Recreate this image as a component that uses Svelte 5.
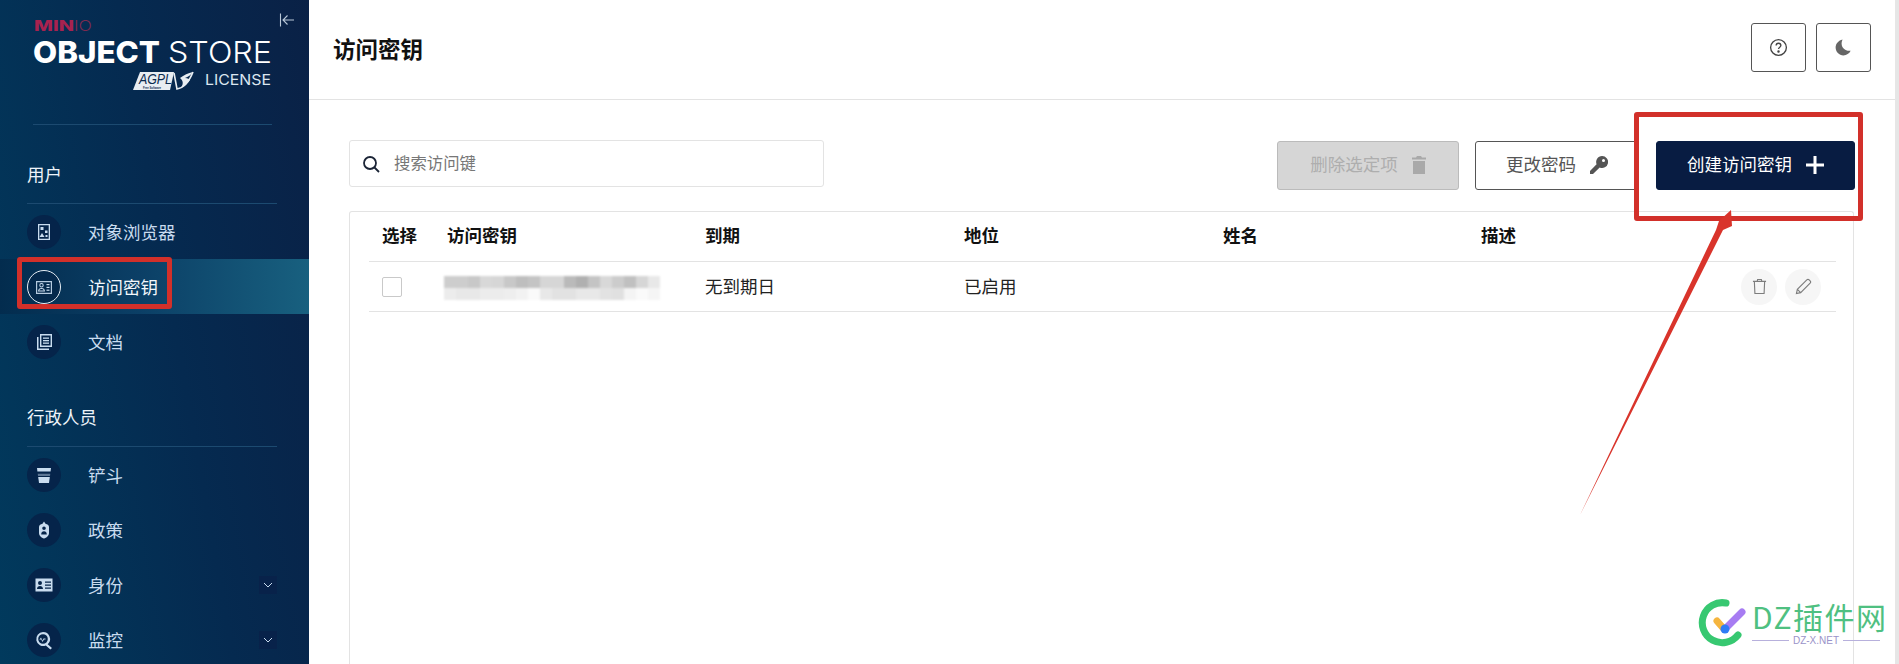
<script>
	const topNav = [
		{ label: '对象浏览器', icon: 'browser' },
		{ label: '访问密钥', icon: 'keys', active: true },
		{ label: '文档', icon: 'docs' }
	];
	const adminNav = [
		{ label: '铲斗', icon: 'bucket' },
		{ label: '政策', icon: 'policy' },
		{ label: '身份', icon: 'identity', more: true },
		{ label: '监控', icon: 'monitor', more: true }
	];
	const columns = ['选择', '访问密钥', '到期', '地位', '姓名', '描述'];
	// pixelated smear over the secret key: greys per 12px block
	const smearTop = [205, 205, 200, 216, 214, 200, 190, 196, 214, 214, 186, 176, 196, 216, 204, 192, 214, 232];
	const smearBottom = [236, 232, 232, 236, 236, 238, 242, 250, 232, 226, 226, 232, 232, 226, 224, 244, 250, 245];
</script>

{#snippet navIcon(name)}
	<svg viewBox="0 0 20 20" width="20" height="20" fill="#c9dcef">
		{#if name === 'browser'}
			<path fill-rule="evenodd" d="M4 2h12v16H4zM5.300 3.300v13.400h9.400V3.300z" />
			<rect x="6.500" y="5" width="3" height="3" />
			<rect x="11" y="8.500" width="2.500" height="2.500" />
			<path d="M8 11l2.500 4h-5z" />
			<rect x="11.500" y="13" width="2" height="2" />
		{:else if name === 'keys'}
			<path fill-rule="evenodd" d="M2 4h16v13H2zM3.200 5.200v10.600h13.600V5.200z" opacity="0.9" />
			<path fill-rule="evenodd" d="M7.500 6a2.200 2.200 0 110 4.400 2.200 2.200 0 010-4.400zM7.500 7a1.200 1.200 0 100 2.400A1.200 1.200 0 007.500 7z" />
			<path fill-rule="evenodd" d="M4 14.500c0-2.500 1.500-3.500 3.500-3.500s3.500 1 3.500 3.500zM5.200 13.500h4.600c-.2-1-1-1.500-2.300-1.500s-2.100.5-2.300 1.500z" />
			<rect x="12.500" y="7" width="3" height="1.200" />
			<rect x="12.500" y="9.800" width="3" height="1.200" />
			<rect x="12.500" y="12.600" width="3" height="1.200" />
		{:else if name === 'docs'}
			<path fill-rule="evenodd" d="M6 2h12v13H6zM7.400 3.400v10.200h9.200V3.400z" />
			<rect x="9" y="5.500" width="6" height="1.300" />
			<rect x="9" y="8" width="6" height="1.300" />
			<rect x="9" y="10.500" width="6" height="1.300" />
			<path d="M3 5h1.500v11.500H15V18H3z" />
		{:else if name === 'bucket'}
			<path d="M3 3h14l-.4 3.500H3.400z" />
			<path d="M3.700 8.800h12.600l-.3 2.200H4z" opacity="0.45" />
			<path d="M4.200 12h11.600L15 18H5z" />
		{:else if name === 'policy'}
			<path fill-rule="evenodd" d="M10 1.500l1.500 2.200c1.800.3 3.500 1.500 3.500 3.300v6c0 2.800-2.500 4.800-5 5.500-2.500-.7-5-2.700-5-5.500V7c0-1.800 1.700-3 3.500-3.300zM10 6.500a1.800 1.800 0 100 3.600 1.800 1.800 0 000-3.600zM7.200 14.500h5.600c0-2-1.200-3.200-2.800-3.200s-2.800 1.200-2.800 3.200z" />
		{:else if name === 'identity'}
			<path fill-rule="evenodd" d="M1.500 3.500h17v13h-17zM6 6a2 2 0 100 4 2 2 0 000-4zM3 14h6c0-2-1.300-3-3-3s-3 1-3 3zM11 6.500v1.300h6V6.500zM11 9.500v1.300h6V9.500zM11 12.500v1.300h6v-1.300z" />
		{:else}
			<path fill-rule="evenodd" d="M9 2a7 7 0 014.700 12.200l4.300 3.800-1.600 1.500-4.600-4A7 7 0 119 2zM9 4.200a4.800 4.800 0 100 9.600 4.800 4.800 0 000-9.600z" />
			<path d="M5.500 9.500l1.500-2 1.500 3 1-2h2v1H10l-1.500 2.500-1.500-3-.8 1z" />
		{/if}
	</svg>
{/snippet}

{#snippet navList(items)}
	{#each items as item}
		<div class="nav-item" class:active={item.active}>
			<span class="nav-icon">{@render navIcon(item.icon)}</span>
			<span class="nav-label">{item.label}</span>
			{#if item.more}
				<span class="nav-more">
					<svg viewBox="0 0 10 10" width="10" height="10" fill="none" stroke="#c9dcef" stroke-width="1">
						<path d="M1 3l4 4 4-4" />
					</svg>
				</span>
			{/if}
		</div>
	{/each}
{/snippet}

<div class="page">
	<aside class="sidebar">
		<div class="logo">
			<svg viewBox="0 0 239 72" width="239" height="72">
				<text x="1" y="13" class="minio" textLength="40" lengthAdjust="spacingAndGlyphs" fill="#a8224f">MIN</text>
				<text x="41" y="13" class="minio-thin" textLength="18" lengthAdjust="spacingAndGlyphs" fill="#7c2a50">IO</text>
				<text x="0" y="45" class="object" textLength="127" lengthAdjust="spacingAndGlyphs" fill="#fff">OBJECT</text>
				<text x="135" y="45" class="store" textLength="104" lengthAdjust="spacingAndGlyphs" fill="#fff">STORE</text>
				<polygon points="107,54 141,54 137,72 100,72" fill="#e8edf2" />
				<text x="106" y="66" class="agpl" textLength="33" lengthAdjust="spacingAndGlyphs" fill="#0a2a4e">AGPL</text>
				<text x="110" y="70.500" class="agpl-sub" textLength="18" lengthAdjust="spacingAndGlyphs" fill="#0a2a4e">Free Software</text>
				<!-- wing mark -->
				<path d="M141 55l3 16c6-1 12-7 16-17" fill="none" stroke="#e8edf2" stroke-width="1.600" />
				<path d="M147 60c4-3 8-5 13-6-2 3-5 5-8 6 3 0 4 1 5 2-2 3-5 6-9 8 2-3 3-7-1-10z" fill="#e8edf2" />
				<text x="172" y="67" class="license" textLength="66" lengthAdjust="spacingAndGlyphs" fill="#dbe6f0">LICENSE</text>
			</svg>
		</div>
		<button class="collapse" aria-label="collapse">
			<svg viewBox="0 0 16 16" width="16" height="16" fill="none" stroke="#b9c8d8" stroke-width="1.100">
				<path d="M1.500 1.500v13M15 8H4M8.500 3.500L4 8l4.500 4.500" />
			</svg>
		</button>

		<div class="section-title">用户</div>
		{@render navList(topNav)}
		<div class="section-title">行政人员</div>
		{@render navList(adminNav)}
	</aside>

	<main class="main">
		<header class="header">
			<h1>访问密钥</h1>
			<div class="header-actions">
				<button class="square" aria-label="help">
					<svg viewBox="0 0 20 20" width="19" height="19" fill="none" stroke="#444" stroke-width="1.400">
						<circle cx="10" cy="10" r="8.300" />
						<path d="M7.500 8a2.500 2.500 0 115 0c0 1.600-2.500 1.800-2.500 3.600" />
						<circle cx="10" cy="14.300" r="0.600" fill="#444" />
					</svg>
				</button>
				<button class="square" aria-label="theme">
					<svg viewBox="0 0 20 20" width="19" height="19" fill="#666">
						<path d="M9 1.500c-1.500 3-1.300 6.300.4 8.700 1.600 2.300 4.500 3.600 8.100 3.300-1.400 2.900-4.300 4.900-7.600 4.900C5.400 18.400 1.700 14.700 1.700 10.100 1.700 6 4.800 2.300 9 1.500z" />
					</svg>
				</button>
			</div>
		</header>

		<section class="content">
			<div class="toolbar">
				<div class="search">
					<svg viewBox="0 0 18 18" width="18" height="18" fill="none" stroke="#1b2436" stroke-width="1.800">
						<circle cx="8" cy="8" r="6" />
						<path d="M12.500 12.500L17 17" />
					</svg>
					<span class="lift">搜索访问键</span>
				</div>
				<div class="toolbar-buttons">
					<button class="btn btn-disabled">
						<span class="lift">删除选定项</span>
						<svg viewBox="0 0 14 18" width="14" height="18" fill="#a9a9a9">
							<path d="M5 0h4l1 1.500h4V3.500H0V1.500h4zM1 5h12v13H1z" />
						</svg>
					</button>
					<button class="btn btn-outline">
						<span class="lift">更改密码</span>
						<svg viewBox="0 0 18 18" width="18" height="18" fill="#555">
							<path fill-rule="evenodd" d="M12 0a6 6 0 11-2.300 11.500L3 18H0v-3l6.600-6.700A6 6 0 0112 0zm1.500 3a1.500 1.500 0 100 3 1.500 1.500 0 000-3z" />
						</svg>
					</button>
					<button class="btn btn-primary">
						<span class="lift">创建访问密钥</span>
						<svg viewBox="0 0 18 18" width="18" height="18" fill="#fff">
							<path d="M7.500 0h3v7.500H18v3h-7.500V18h-3v-7.500H0v-3h7.500z" />
						</svg>
					</button>
				</div>
			</div>

			<div class="table">
				<div class="row head">
					{#each columns as column}
						<span>{column}</span>
					{/each}
				</div>
				<div class="row">
					<span class="check"></span>
					<span class="smear">
						<span class="smear-row">
							{#each smearTop as g}
								<i style="background: rgb({g},{g},{g})"></i>
							{/each}
						</span>
						<span class="smear-row">
							{#each smearBottom as g}
								<i style="background: rgb({g},{g},{g})"></i>
							{/each}
						</span>
					</span>
					<span class="lift">无到期日</span>
					<span class="lift">已启用</span>
					<span></span>
					<span class="row-actions">
						<button class="round" aria-label="delete">
							<svg viewBox="0 0 16 18" width="15" height="17" fill="none" stroke="#7d7d7d" stroke-width="1.200">
								<path d="M1 3.500h14M5.500 3.500l.5-2h4l.5 2M2.500 3.500l.6 13h9.800l.6-13" />
							</svg>
						</button>
						<button class="round" aria-label="edit">
							<svg viewBox="0 0 18 18" width="17" height="17" fill="none" stroke="#7d7d7d" stroke-width="1.200">
								<path d="M1.500 16.500l1-4.500L12.500 2a1.800 1.800 0 012.500 0l1 1a1.800 1.800 0 010 2.500L6 15.500zM2.500 12L6 15.500" />
							</svg>
						</button>
					</span>
				</div>
			</div>
		</section>
	</main>

	<div class="scrollbar"></div>

	<!-- annotations drawn on top of the screenshot -->
	<div class="mark mark-nav"></div>
	<div class="mark mark-create"></div>
	<svg class="arrow" viewBox="0 0 160 315" width="160" height="315">
		<polygon points="0,310 136,25 139,16 151,5 152,21 143,25" fill="#d9342b" />
	</svg>

	<div class="watermark">
		<svg viewBox="0 0 50 52" width="50" height="52">
			<path d="M29 5A20 20 0 1 0 41 37" fill="none" stroke="#37c871" stroke-width="7" stroke-linecap="round" />
			<path d="M20 23l7 8" stroke="#f5b53f" stroke-width="7" stroke-linecap="round" />
			<path d="M28 31l17-17" stroke="#a77cf2" stroke-width="7" stroke-linecap="round" />
			<circle cx="28" cy="31" r="4.500" fill="#2f7cf6" />
		</svg>
		<div class="wm-text">
			<div class="wm-name">DZ插件网</div>
			<div class="wm-site"><span>DZ-X.NET</span></div>
		</div>
	</div>
</div>

<style>
	:global(body) {
		margin: 0;
		background: #fff;
		font-family: 'Noto Sans CJK SC', 'Liberation Sans', sans-serif;
	}

	.page {
		position: relative;
		display: flex;
		height: 664px;
		overflow: hidden;
		color: #222;
	}

	button {
		font: inherit;
		cursor: pointer;
	}

	.lift {
		margin-bottom: 3px;
	}

	.sidebar {
		position: relative;
		flex: none;
		width: 309px;
		height: 664px;
		background: linear-gradient(80deg, #013a5d 0%, #052a50 55%, #0a2146 100%);
		color: #fff;
	}

	.logo {
		height: 125px;
		margin: 0 37px 1px 33px;
		padding-top: 18px;
		box-sizing: border-box;
		border-bottom: 1px solid #1c4a70;
	}

	.logo svg {
		display: block;
	}

	.minio {
		font: 800 14px Inter, sans-serif;
	}

	.minio-thin {
		font: 300 14px Inter, sans-serif;
	}

	.object {
		font: 800 30px Inter, sans-serif;
	}

	.store {
		font: 300 30px Inter, sans-serif;
	}

	.agpl {
		font: italic 400 14px 'Liberation Sans', sans-serif;
	}

	.agpl-sub {
		font: 700 3.500px 'Liberation Sans', sans-serif;
	}

	.license {
		font: 400 15px Inter, sans-serif;
	}

	.collapse {
		position: absolute;
		top: 12px;
		left: 279px;
		padding: 0;
		border: 0;
		background: none;
		line-height: 0;
	}

	.section-title {
		display: flex;
		align-items: flex-end;
		height: 78px;
		box-sizing: border-box;
		margin: 0 32px 0 27px;
		padding-bottom: 17px;
		border-bottom: 1px solid #1c4a70;
		font-size: 17.500px;
		line-height: 24px;
		color: #eef4fa;
	}

	.nav-item {
		display: flex;
		align-items: center;
		height: 55px;
		padding: 0 32px 0 27px;
		color: #c9dcef;
		font-size: 17.500px;
	}

	.nav-item.active {
		background: linear-gradient(90deg, #032c4e 0%, #0b3f66 45%, #18607f 100%);
		color: #f2f7fb;
	}

	.nav-icon {
		flex: none;
		display: flex;
		align-items: center;
		justify-content: center;
		width: 34px;
		height: 34px;
		box-sizing: border-box;
		margin-right: 27px;
		border-radius: 50%;
		background: #05244a;
	}

	.active .nav-icon {
		border: 1px solid #e6eef5;
		background: #04294c;
	}

	.nav-label {
		flex: 1;
	}

	.nav-more {
		display: flex;
		align-items: center;
		justify-content: center;
		width: 18px;
		height: 18px;
		background: #08224a;
	}

	.main {
		flex: 1;
		min-width: 0;
		display: flex;
		flex-direction: column;
	}

	.header {
		flex: none;
		display: flex;
		align-items: center;
		justify-content: space-between;
		height: 100px;
		box-sizing: border-box;
		padding: 0 24px 4px 24px;
		border-bottom: 1px solid #e3e3e3;
	}

	h1 {
		margin: 0;
		font-size: 22.500px;
		font-weight: 700;
		color: #111;
	}

	.header-actions {
		display: flex;
		gap: 10px;
	}

	.square {
		display: flex;
		align-items: center;
		justify-content: center;
		width: 55px;
		height: 49px;
		padding: 0;
		background: #fff;
		border: 1px solid #555;
		border-radius: 3px;
	}

	.content {
		flex: 1;
		display: flex;
		flex-direction: column;
		padding: 40px 41px 0 40px;
	}

	.toolbar {
		display: flex;
		align-items: flex-start;
		justify-content: space-between;
		margin-right: -1px;
	}

	.search {
		display: flex;
		align-items: center;
		gap: 14px;
		width: 475px;
		height: 47px;
		box-sizing: border-box;
		padding-left: 12px;
		border: 1px solid #e3e3e3;
		border-radius: 3px;
		font-size: 16.400px;
		color: #777;
	}

	.toolbar-buttons {
		display: flex;
		margin-top: 1px;
	}

	.btn {
		display: flex;
		align-items: center;
		justify-content: center;
		gap: 14px;
		height: 49px;
		padding: 0 0 2px;
		border-radius: 3px;
		font-size: 17.500px;
	}

	.btn-disabled {
		width: 182px;
		margin-right: 16px;
		background: #d6d6d6;
		border: 1px solid #bbb;
		color: #aeaeae;
	}

	.btn-outline {
		width: 164px;
		margin-right: 17px;
		background: #fff;
		border: 1px solid #555;
		color: #555;
	}

	.btn-primary {
		width: 199px;
		background: #081c42;
		border: 1px solid #081c42;
		color: #fff;
	}

	.table {
		flex: 1;
		margin-top: 21px;
		padding: 0 17px 0 19px;
		border: 1px solid #e3e3e3;
		border-bottom: 0;
		border-radius: 3px 3px 0 0;
	}

	.row {
		display: grid;
		grid-template-columns: 65px 258px 259px 259px 258px 1fr;
		align-items: center;
		height: 50px;
		padding-left: 13px;
		box-sizing: border-box;
		border-bottom: 1px solid #e3e3e3;
		font-size: 17.500px;
		color: #222;
	}

	.row.head {
		padding-bottom: 5px;
		font-weight: 700;
		color: #111;
	}

	.check {
		width: 20px;
		height: 20px;
		box-sizing: border-box;
		border: 1px solid #c9c9c9;
		border-radius: 2px;
	}

	.smear {
		display: block;
		width: 216px;
		margin: 3px 0 0 -3px;
		filter: blur(1.200px);
	}

	.smear-row {
		display: flex;
		height: 12px;
	}

	.smear-row i {
		width: 12px;
	}

	.row-actions {
		grid-column: 6;
		grid-row: 1;
		display: flex;
		justify-content: flex-end;
		gap: 8px;
		margin-right: 15px;
	}

	.round {
		display: flex;
		align-items: center;
		justify-content: center;
		width: 36px;
		height: 36px;
		padding: 0;
		border: 0;
		border-radius: 50%;
		background: #f6f6f6;
	}

	.scrollbar {
		flex: none;
		width: 4px;
		background: #e6e6e6;
	}

	.mark {
		position: absolute;
		box-sizing: border-box;
		border: 5px solid #d2302a;
		border-radius: 3px;
	}

	.mark-nav {
		left: 17px;
		top: 257px;
		width: 155px;
		height: 52px;
	}

	.mark-create {
		left: 1634px;
		top: 112px;
		width: 229px;
		height: 109px;
	}

	.arrow {
		position: absolute;
		left: 1580px;
		top: 205px;
	}

	.watermark {
		position: absolute;
		left: 1697px;
		top: 598px;
		display: flex;
		gap: 5px;
	}

	.wm-text {
		width: 128px;
	}

	.wm-name {
		font-size: 30px;
		line-height: 36px;
		letter-spacing: 1.500px;
		white-space: nowrap;
		color: #4fc081;
	}

	.wm-site {
		display: flex;
		align-items: center;
		justify-content: center;
		height: 12px;
		font: 10px 'Liberation Sans', sans-serif;
		color: #9a93c9;
		background: linear-gradient(#b7b0dc, #b7b0dc) center / 100% 1px no-repeat;
	}

	.wm-site span {
		padding: 0 4px;
		background: #fff;
	}
</style>
